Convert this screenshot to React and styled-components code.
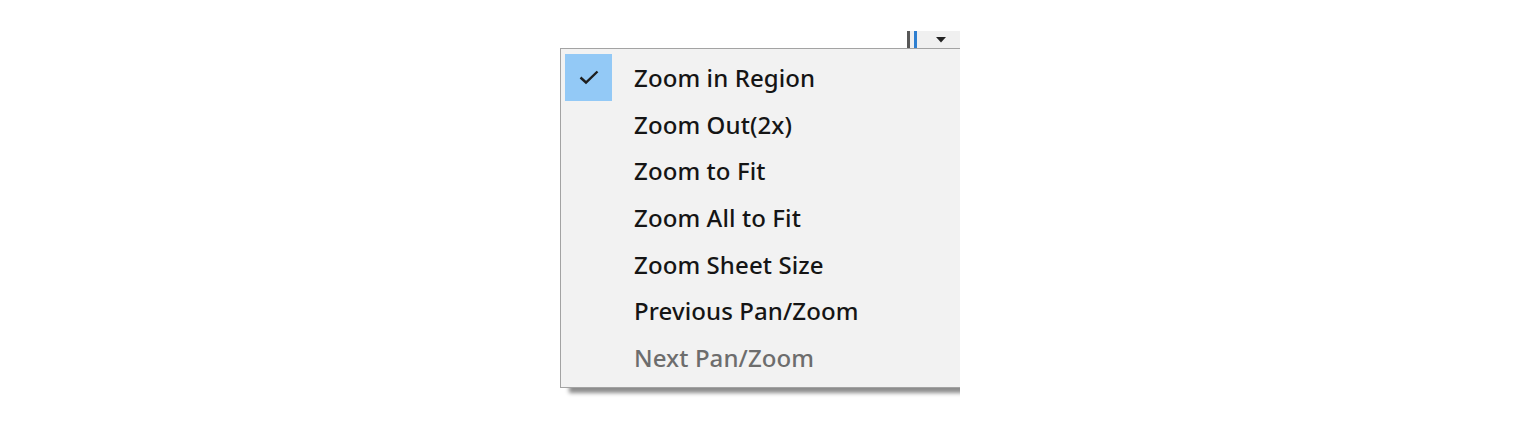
import React from "react";
import styled, { createGlobalStyle } from "styled-components";

const Global = createGlobalStyle`
  html, body { margin: 0; padding: 0; background: #ffffff; }
  body { font-family: "Noto Sans", "Open Sans", sans-serif; }
`;

const Page = styled.div`
  width: 1520px;
  height: 430px;
  box-sizing: border-box;
  padding: 31px 0 0 560px;
`;

const Clip = styled.div`
  width: 400px;
  overflow: hidden;
  padding-bottom: 12px;
  display: flex;
  flex-direction: column;
`;

const Toolbar = styled.div`
  display: flex;
  justify-content: flex-end;
  height: 17px;
`;

const Strip = styled.div`
  width: 53px;
  height: 17px;
  display: flex;
  align-items: stretch;
  background: #f0f0f0;
`;

const Bar = styled.div`
  width: ${(p) => p.$w}px;
  margin-left: ${(p) => p.$ml}px;
  background: ${(p) => p.$c};
`;

const DropArrow = styled.div`
  flex: 1;
  display: flex;
  align-items: center;
  justify-content: center;
  padding-left: 4px;
  svg { display: block; }
`;

const Menu = styled.div`
  width: 430px;
  box-sizing: border-box;
  background: #f2f2f2;
  border: 1px solid #a3a3a3;
  padding: 5px 0 6px 4px;
  display: flex;
  flex-direction: column;
  box-shadow: 9px 5px 4px rgba(0, 0, 0, 0.45);
`;

const Item = styled.div`
  height: 46.7px;
  display: flex;
  align-items: center;
  font-size: 24px;
  font-weight: 500;
  color: ${(p) => (p.$disabled ? "#6d6d6d" : "#151515")};
  letter-spacing: 0.1px;
`;

const CheckCell = styled.div`
  width: 47px;
  height: 47px;
  flex: none;
  display: flex;
  align-items: center;
  justify-content: center;
  background: ${(p) => (p.$checked ? "#93c9f6" : "transparent")};
  margin-right: 22px;
`;

const Label = styled.span`
  white-space: nowrap;
  line-height: 1;
  padding-top: 1px;
`;

const Check = () => (
  <svg width="22" height="16" viewBox="0 0 22 16">
    <path d="M2.5 8.5 L8 13.5 L19.5 2.5" fill="none" stroke="#1e1e1e" strokeWidth="2.4" />
  </svg>
);

const items = [
  { label: "Zoom in Region", checked: true },
  { label: "Zoom Out(2x)" },
  { label: "Zoom to Fit" },
  { label: "Zoom All to Fit" },
  { label: "Zoom Sheet Size" },
  { label: "Previous Pan/Zoom" },
  { label: "Next Pan/Zoom", disabled: true },
];

export default function App() {
  return (
    <>
      <Global />
      <Page>
        <Clip>
          <Toolbar>
            <Strip>
              <Bar $w={3} $ml={0} $c="#585858" />
              <Bar $w={3} $ml={4} $c="#2f7fd0" />
              <DropArrow>
                <svg width="10" height="6" viewBox="0 0 10 6">
                  <path d="M0 0 H10 L5 5.5 Z" fill="#222" />
                </svg>
              </DropArrow>
            </Strip>
          </Toolbar>
          <Menu>
            {items.map((it) => (
              <Item key={it.label} $disabled={it.disabled}>
                <CheckCell $checked={it.checked}>{it.checked && <Check />}</CheckCell>
                <Label>{it.label}</Label>
              </Item>
            ))}
          </Menu>
        </Clip>
      </Page>
    </>
  );
}
